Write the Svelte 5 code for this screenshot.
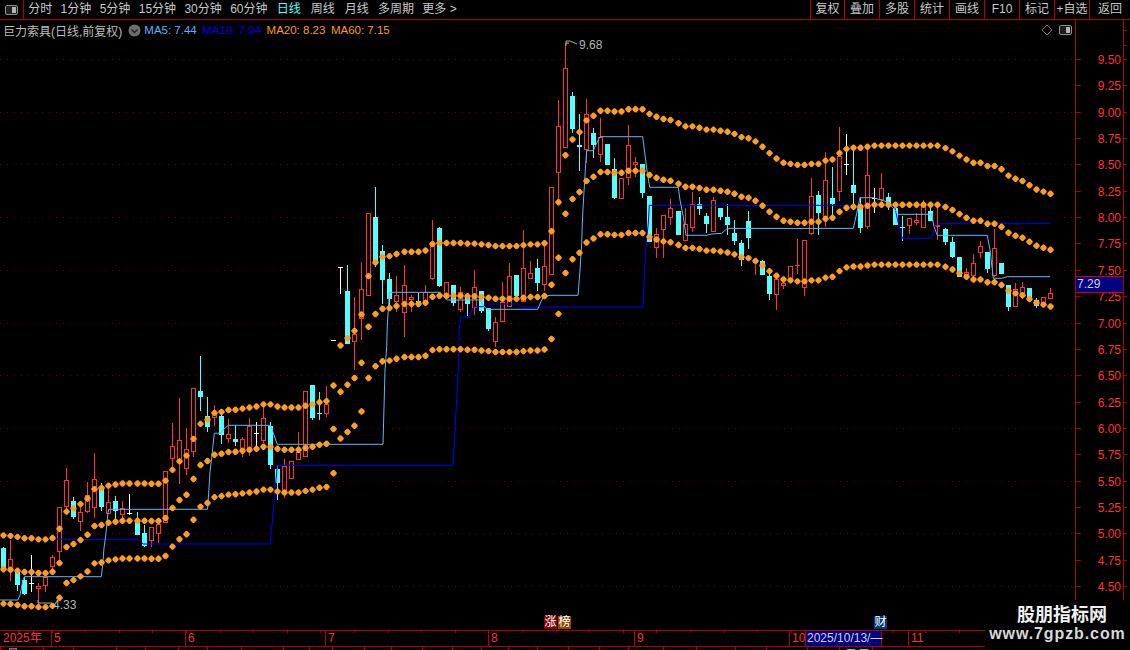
<script>
	const tabs = ['分时', '1分钟', '5分钟', '15分钟', '30分钟', '60分钟', '日线', '周线', '月线', '多周期', '更多 >'];
	const tools = ['复权', '叠加', '多股', '统计', '画线', 'F10', '标记', '+自选', '返回'];
	const months = [
		{ label: '2025年', width: 51 },
		{ label: '5', width: 134 },
		{ label: '6', width: 140 },
		{ label: '7', width: 163 },
		{ label: '8', width: 146 },
		{ label: '9', width: 155 },
		{ label: '10', width: 16 },
		{ label: '2025/10/13/—', width: 77, active: true },
		{ label: '', width: 26, plain: true },
		{ label: '11', width: 75 }
	];
	// lower tab row, only its top edge shows
	const stripEdges = [0, 43, 73, 116, 145, 178, 207, 241, 283, 309, 332, 364, 391, 422, 452, 481, 508, 537, 568, 599, 628, 663, 696, 735, 766, 807, 839, 872, 984];
	const stripText = { 0: '量', 26: '盈亏' };

	// pixel y of the middle band, one value per bar
	const mid = [
		569.3, 569.7, 570.7, 572, 572, 573, 573, 571.7, 563, 547, 544, 540, 534.7, 526, 525, 522.7, 521.7, 520.7, 520.7, 520.7,
		520.7, 521, 521, 518, 508, 500, 494.7, 479, 465, 461, 454.7, 453.7, 452, 451.7, 450.7, 449.7, 448.7, 446.7, 446.7, 448.7,
		449.7, 449.7, 449.7, 448, 446.7, 444.7, 443.7, 429, 391.7, 384.7, 378, 362.7, 326.7, 314, 308.7, 308, 306, 304, 304, 304,
		302.7, 296.7, 295.7, 295.7, 295.7, 295.7, 296.3, 296.3, 297, 297.7, 298.7, 298.7, 298.7, 298.7, 297.7, 297, 297, 296, 284.7, 257.7,
		213.7, 199, 192, 181, 176.7, 172, 172, 172.7, 172.7, 170.7, 170.7, 170.7, 175, 177.7, 179.7, 180.7, 183.7, 186.7, 186.7, 188,
		189.7, 189.7, 190.7, 191.7, 193.7, 196.7, 197.7, 200.7, 205.7, 211.7, 216.7, 220.7, 221.7, 222.7, 222.7, 221.7, 221.7, 218.7, 217.7, 211.7,
		207.7, 206.7, 206.7, 205.7, 204.7, 204.7, 204.7, 204.7, 204.7, 204.7, 204.7, 204.7, 204.7, 204.7, 207, 210, 214, 217.7, 220.7, 220.7,
		223.7, 223.7, 226.7, 232.7, 235.7, 237.7, 241.7, 245.7, 247.7, 249.7
	];

	// kind, body top, body bottom, high, low (all pixel y)
	const bars = `c 548 570 547 570|r 559 569 540 581|c 572 585 572 591|c 580 594 577 595|w 583 584 555 592|r 586 589 583 607|r 577 586 577 592|r 557 567 555 570|r 507 552 507 562|r 480 507 468 512
c 501 517 497 519|r 512 522 503 531|r 495 512 482 513|r 479 508 453 518|c 487 507 483 511|r 502 514 487 514|c 501 511 496 519|r 508 515 501 520|w 513 514 494 515|c 522 535 512 535
c 533 546 525 547|r 527 541 527 547|r 524 534 520 543|r 471 523 471 523|r 446 459 423 470|r 440 463 398 484|r 449 469 428 475|r 388 452 388 457|c 391 397 356 411|c 416 427 397 432
r 413 418 405 426|c 416 435 413 444|r 434 439 419 443|c 439 442 425 446|r 439 450 437 457|r 426 452 418 456|w 433 434 422 447|r 418 441 405 443|c 426 465 422 469|c 469 483 465 500
r 466 492 459 498|r 461 479 461 479|r 452 460 432 460|r 391 457 391 457|c 385 418 385 420|c 413 414 392 420|r 404 414 386 417|w 340 341 340 341|w 267 268 267 294|c 291 344 265 344
r 334 342 297 370|r 289 319 262 340|r 213 296 213 296|c 217 262 187 267|c 251 280 245 304|c 279 299 273 308|r 295 302 276 312|r 285 313 265 337|r 297 300 295 312|c 301 304 293 305
r 292 302 285 303|r 242 279 220 280|c 228 286 227 287|r 282 298 282 298|c 285 303 285 306|r 292 310 287 312|c 295 304 293 316|r 287 308 270 315|c 291 311 291 313|c 308 329 308 331
r 322 342 317 347|r 302 322 282 322|r 276 307 263 307|c 275 296 275 296|r 268 302 230 302|r 273 279 261 279|c 268 283 259 291|r 266 285 246 291|r 187 275 187 275|r 126 173 100 202
r 68 148 43 148|c 96 129 92 133|c 145 147 114 171|r 114 150 99 163|c 133 145 128 158|r 137 155 118 162|c 144 165 144 165|c 169 198 158 199|r 178 199 178 199|r 145 178 125 185
r 162 165 157 177|c 164 193 164 198|c 196 242 196 242|r 234 248 228 258|r 215 230 215 258|r 208 218 199 225|c 211 235 211 235|r 224 241 208 241|r 204 228 192 232|c 204 209 197 215
c 216 224 213 233|r 200 232 197 232|c 208 217 208 220|c 217 225 204 235|c 233 241 220 245|c 243 260 240 266|c 221 238 211 249|r 260 263 260 275|c 261 275 260 275|c 276 294 273 300
r 279 295 279 310|r 283 286 281 289|r 266 280 266 283|r 265 266 239 274|r 240 288 240 296|r 196 234 178 235|c 195 213 191 235|r 180 217 152 227|c 198 204 167 219|r 156 192 127 201
w 164 165 134 175|c 185 193 150 206|c 208 228 197 233|r 175 227 148 229|w 198 199 188 213|r 188 200 173 202|c 197 205 193 210|c 208 225 205 225|c 227 228 216 241|r 218 226 218 234
r 220 223 213 225|r 205 228 200 228|c 211 221 208 221|r 225 227 205 240|c 229 242 228 245|c 242 257 237 258|c 257 277 257 277|r 272 277 268 279|r 263 276 254 280|r 246 253 241 258
c 252 269 252 273|r 248 276 229 277|c 263 274 263 274|c 285 307 285 311|r 289 307 283 307|r 287 297 282 299|c 288 299 288 299|c 300 306 298 308|r 297 306 297 306|r 293 299 288 299`
		.split(/[|\n]/)
		.map((s) => {
			const [kind, top, bottom, high, low] = s.trim().split(' ');
			return { kind, top: +top, bottom: +bottom, high: +high, low: +low };
		});

	const ma5 = '0,600 18,600 20,595 23,580 24.5,576.7 101.3,576.7 102.7,565 104,548 106,533 107.5,517 108.7,509.3 207.5,509.3 208.7,493 210,471.7 211.3,461.7 212.7,448.3 214.3,433.3 221,433 223,430 228.3,425.3 270.7,425.3 273.3,433 277.3,444.3 383,444.3 385,370 386.7,346.7 387.3,325 388.7,303.3 389.3,292.3 440,292.3 446.7,300 480,300 483,305 486.7,309.3 537.7,309.3 543.3,296.7 550,295.3 578,295.3 580,270 581.7,243 582.3,223 583.3,203 585.3,170 586.7,150.7 593.3,150.7 596.7,143 600,136.7 642.7,136.7 645,155 647.3,173 649.7,187.3 678.3,187.3 680,200 683.3,216.7 686,235.3 706.7,235.3 711.7,234 721.7,233.3 726.7,229 730,228.4 853.3,228.4 856.7,213.3 860,197.7 873.3,197.7 886.7,201.7 893.3,208 898.3,214.3 931.7,214.3 934,226.7 937.3,235.3 987.3,235.3 990,250 993.3,278.3 1001.7,278.3 1007.3,276.7 1050,276.7';
	const ma10 = '55,539.3 137.3,539.3 143.3,544 270,544 271.7,528 274,503 276,480 277.3,465.3 453,465.3 458.3,370 459.3,328 460.7,317.3 468,317.3 474,306.7 483.3,306.7 486.7,304 516.7,304 522.7,307 643,307 645.3,256.7 646.3,243 648.3,223 649.3,205.3 892.7,205.3 895,208 898.3,223.3 902.3,238.3 930.7,238.3 936.7,224 960,223.3 1050,223.3';

	const barX = (i) => 3.3 + 7 * i + (i >= 19) + (i >= 57) + (i >= 96) + (i >= 134);
	const priceY = (p) => 586 - (p - 4.5) * 105.4;
	const yPrice = (y) => 4.5 + (586 - y) / 105.4;

	// small rounded diamond
	const blob = (x, y, a, b) =>
		`M${x - a} ${y - b}H${x + a}L${x + b} ${y - a}V${y + a}L${x + a} ${y + b}H${x - a}L${x - b} ${y + a}V${y - a}Z`;
	const dots = mid
		.map((y, i) => {
			const p = yPrice(y);
			const x = Math.round(barX(i)) + 0.5;
			return blob(x, priceY(p * 1.069), 0.7, 3.2) + blob(x, y, 0.7, 3.2) + blob(x, priceY(p * 0.93), 0.7, 3.2);
		})
		.join('');

	const candles = bars.map((b, i) => ({ ...b, cx: Math.round(barX(i)) }));

	const grid = [9.5, 9, 8.5, 8, 7.5, 7, 6.5, 6, 5.5, 5, 4.5].map((p) => Math.round(priceY(p)) + 0.5);
	const ticks = [];
	for (let p = 9.5; p >= 4.5; p -= 0.25) ticks.push({ y: Math.round(priceY(p)) + 0.5, label: p.toFixed(2) });
</script>

<div class="screen">
	<header class="toolbar">
		<div class="toggle">
			<svg width="14" height="10" viewBox="0 0 14 10">
				<rect x="0.5" y="0.5" width="12" height="9" rx="1.5" fill="#222" stroke="#8c8c8c" />
				<rect x="7" y="2" width="4" height="6" fill="#b4b4b4" />
			</svg>
		</div>
		<nav class="tabs">
			{#each tabs as tab}
				<span class="tab" class:active={tab === '日线'} class:wide={tab === '周线' || tab === '月线' || tab === '日线'}>{tab}</span>
			{/each}
		</nav>
		<div class="tools">
			{#each tools as tool}
				<span class="tool">{tool}</span>
			{/each}
		</div>
	</header>

	<div class="main">
		<div class="plot">
			<div class="legend">
				<span class="name">巨力索具(日线,前复权)</span>
				<svg class="chev" width="13" height="13" viewBox="0 0 13 13">
					<circle cx="6.5" cy="6.5" r="6" fill="#6e6e6e" />
					<path d="M3.5 5.5 L6.5 8.5 L9.5 5.5" fill="none" stroke="#222" stroke-width="1.4" />
				</svg>
				<span class="ma5">MA5: 7.44</span>
				<span class="ma10">MA10: 7.94</span>
				<span class="ma20">MA20: 8.23</span>
				<span class="ma20">MA60: 7.15</span>
				<span class="legend-icons">
					<svg width="12" height="12" viewBox="0 0 12 12">
						<path d="M6 1 L11 6 L6 11 L1 6 Z" fill="none" stroke="#6e6e6e" />
					</svg>
					<svg width="13" height="10" viewBox="0 0 13 10">
						<rect x="0.5" y="0.5" width="12" height="9" rx="1.5" fill="#1c1c1c" stroke="#8c8c8c" />
						<rect x="7" y="2" width="4" height="6" fill="#b4b4b4" />
					</svg>
				</span>
			</div>

			<svg class="chart" width="1075" height="610" viewBox="0 20 1075 610">
				{#each grid as y}
					<line x1="0" x2="1075" y1={y} y2={y} class="grid" />
				{/each}

				<g shape-rendering="crispEdges">
					{#each candles as c}
						<line x1={c.cx + 0.5} x2={c.cx + 0.5} y1={c.high} y2={c.low} class="wick {c.kind}" />
						{#if c.bottom - c.top < 2}
							<rect x={c.cx - 2} y={c.top} width="5" height="1" class="fill {c.kind}" />
						{:else if c.kind === 'r'}
							<rect x={c.cx - 1.5} y={c.top + 0.5} width="4" height={c.bottom - c.top - 1} class="hollow" />
						{:else}
							<rect x={c.cx - 2} y={c.top} width="5" height={c.bottom - c.top} class="fill {c.kind}" />
						{/if}
					{/each}
				</g>

				<polyline points={ma10} class="line-ma10" />
				<polyline points={ma5} class="line-ma5" />
				<path d={dots} class="dots" />

				<g class="note">
					<path d="M566 41 h4 M566 41 v5 M566 43 h3 M570 41 L577 44" />
					<text x="579" y="49">9.68</text>
					<path d="M38 603 v-3 M38 603 h14" />
					<text x="53" y="609">4.33</text>
				</g>
			</svg>
		</div>

		<div class="axis">
			<svg width="48" height="610" viewBox="1075 20 48 610">
				{#each ticks as t}
					<line x1="1075" x2="1081" y1={t.y} y2={t.y} class="tick" />
					<text x="1121" y={t.y + 4} text-anchor="end" class="price">{t.label}</text>
				{/each}
			</svg>
			<div class="last">7.29</div>
		</div>

		<svg class="rail" width="7" height="610" viewBox="1123 20 7 610">
			<line x1="1123.5" x2="1123.5" y1="20" y2="630" class="tick" />
			{#each ticks as t}
				<line x1="1123" x2="1127" y1={t.y} y2={t.y} class="tick" />
			{/each}
			<line x1="1123" x2="1127" y1="30.5" y2="30.5" class="tick" />
			<line x1="1123" x2="1127" y1="45.5" y2="45.5" class="tick" />
		</svg>
	</div>

	<div class="timeline">
		{#each months as m}
			<span class="month" class:active={m.active} class:plain={m.plain} style="width: {m.width}px">{m.label}</span>
		{/each}
	</div>

	<div class="strip">
		{#each stripEdges.slice(0, -1) as edge, i}
			<span class="cell" class:lit={i === 26} style="width: {stripEdges[i + 1] - edge}px">{stripText[i] ?? ''}</span>
		{/each}
	</div>

	<span class="badge rank">涨</span>
	<span class="badge list">榜</span>
	<span class="badge money">财</span>

	<div class="watermark">
		<strong>股朋指标网</strong>
		<span>www.7gpzb.com</span>
	</div>
</div>

<style>
	:global(body) {
		margin: 0;
		background: #000;
	}

	.screen {
		position: relative;
		width: 1130px;
		height: 650px;
		overflow: hidden;
		background: #000;
		color: #c8c8c8;
		font: 12px 'Liberation Sans', 'Noto Sans CJK SC', sans-serif;
	}

	.toolbar {
		display: flex;
		height: 19px;
		border-bottom: 1px solid #b40000;
		line-height: 19px;
	}

	.toggle {
		display: flex;
		align-items: center;
		justify-content: center;
		width: 23px;
		border-right: 1px solid #b40000;
	}

	.tabs {
		display: flex;
		flex: 1;
	}

	.tab {
		padding: 0 4.2px;
		white-space: nowrap;
	}

	.tab.wide {
		padding: 0 5px;
	}

	.tab.active {
		color: #54ffff;
	}

	.tools {
		display: flex;
	}

	.tool {
		width: 34px;
		border-left: 1px solid #b40000;
		text-align: center;
	}

	.tool:first-child {
		width: 33px;
	}

	.tool:last-child {
		width: 40px;
	}

	.main {
		display: flex;
		height: 610px;
	}

	.plot {
		position: relative;
		width: 1075px;
	}

	.chart,
	.rail {
		display: block;
	}

	.legend {
		position: absolute;
		left: 3px;
		right: 3px;
		top: 2px;
		display: flex;
		align-items: center;
		gap: 5.5px;
		height: 16px;
		font-size: 11.5px;
		white-space: nowrap;
	}

	.name {
		font-size: 12px;
		color: #bcbcbc;
	}

	.chev {
		margin-right: -2px;
	}

	.ma5 {
		color: #54b4ff;
	}

	.ma10 {
		color: #0000e6;
	}

	.ma20 {
		color: #ff9a14;
	}

	.legend-icons {
		display: flex;
		align-items: center;
		gap: 6px;
		margin-left: auto;
	}

	.grid {
		stroke: #780000;
		stroke-dasharray: 1 6;
	}

	.wick {
		stroke-width: 1;
	}

	.wick.r {
		stroke: #ff3232;
	}

	.wick.c {
		stroke: #54ffff;
	}

	.wick.w {
		stroke: #fff;
	}

	.fill.r {
		fill: #ff3232;
	}

	.fill.c {
		fill: #54ffff;
	}

	.fill.w {
		fill: #fff;
	}

	.hollow {
		fill: #000;
		stroke: #ff3232;
	}

	.line-ma5,
	.line-ma10 {
		fill: none;
		stroke-width: 1;
	}

	.line-ma5 {
		stroke: #5cb8ff;
	}

	.line-ma10 {
		stroke: #0000ff;
	}

	.dots {
		fill: #ff9d1c;
	}

	.note path {
		fill: none;
		stroke: #a8a8a8;
	}

	.note text {
		fill: #b4b4b4;
		font-size: 12px;
	}

	.axis {
		position: relative;
		width: 48px;
		border-left: 1px solid #b40000;
		box-sizing: border-box;
	}

	.axis svg {
		display: block;
		margin-left: -1px;
	}

	.tick {
		stroke: #b40000;
	}

	.price {
		fill: #ff3232;
		font-size: 12px;
	}

	.last {
		position: absolute;
		left: 0;
		right: 0;
		top: 256px;
		height: 15px;
		padding-left: 1px;
		border-top: 1px solid #d80000;
		border-bottom: 1px solid #d80000;
		background: #000080;
		color: #d0d0e8;
		line-height: 15px;
	}

	.timeline {
		display: flex;
		height: 15px;
		border-top: 1px solid #b40000;
		border-bottom: 1px solid #b40000;
		color: #ff3232;
		line-height: 15px;
		background: repeating-linear-gradient(90deg, #b40000 0 1px, transparent 1px 33.6px) 18px 0 / 100% 2px no-repeat;
	}

	.month {
		box-sizing: border-box;
		padding-left: 2px;
		border-left: 1px solid #b40000;
		white-space: nowrap;
	}

	.month:first-child {
		border-left: 0;
		padding-left: 3px;
	}

	.month.active {
		padding-left: 1px;
		background: #000080;
		color: #d0d0e8;
		border-right: 1px solid #b40000;
	}

	.month.plain {
		border-left: 0;
	}

	.strip {
		display: flex;
		height: 4px;
		overflow: hidden;
		line-height: 12px;
		color: #c8c8c8;
	}

	.cell {
		box-sizing: border-box;
		flex: none;
		padding: 2px 0 0 6px;
		border-left: 1px solid #b40000;
		white-space: nowrap;
	}

	.cell.lit {
		color: #54ffff;
	}

	.badge {
		position: absolute;
		top: 616px;
		width: 13px;
		height: 13px;
		color: #fff;
		line-height: 13px;
		text-align: center;
	}

	.rank {
		left: 544px;
		background: #8c0000;
	}

	.list {
		left: 558px;
		background: #8c4a00;
	}

	.money {
		left: 874px;
		background: #003a78;
	}

	.watermark {
		position: absolute;
		left: 985px;
		right: 0;
		top: 600px;
		bottom: 0;
		display: flex;
		flex-direction: column;
		align-items: center;
		padding-top: 6px;
		background: #000;
		color: #f0f0f0;
		line-height: 19px;
	}

	.watermark strong {
		margin-left: 9px;
		font-size: 18px;
	}

	.watermark span {
		margin-top: -1px;
		font-size: 16px;
		font-weight: 700;
		letter-spacing: 0.9px;
		color: #d8d8d8;
	}
</style>
